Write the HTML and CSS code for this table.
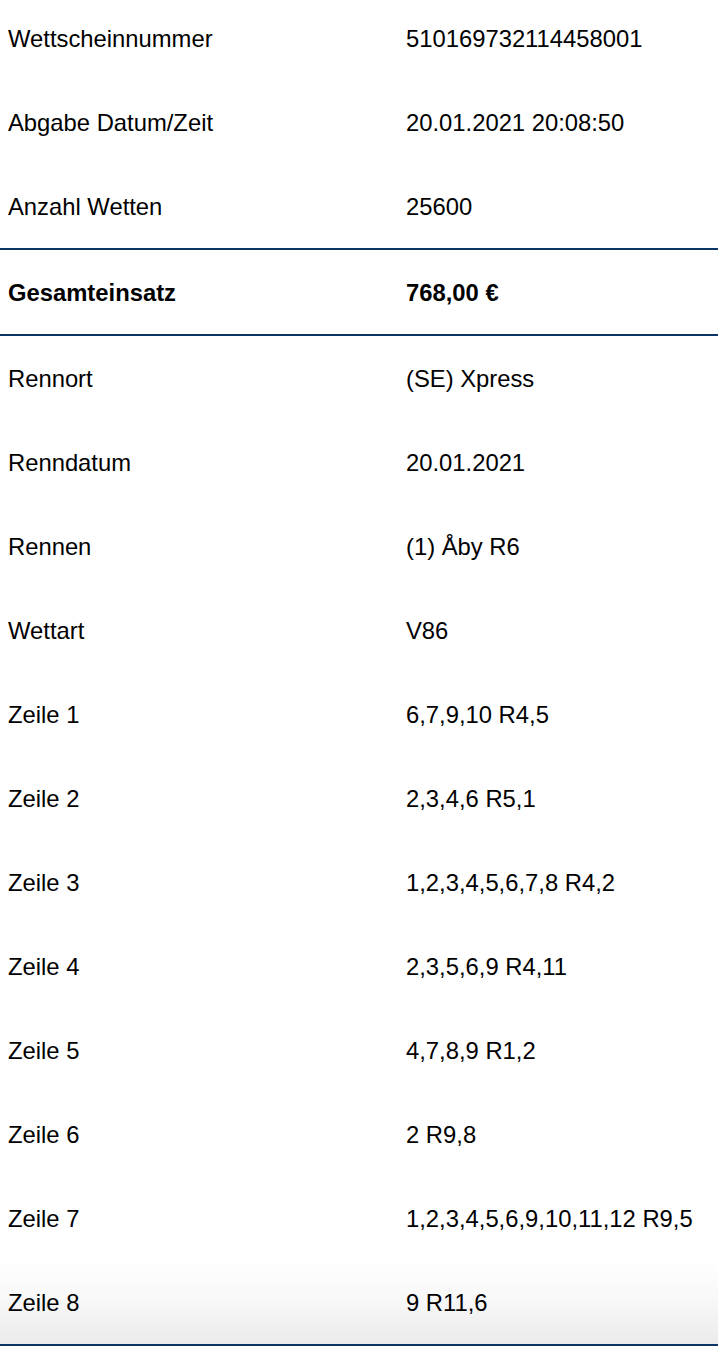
FILE: index.html
```html
<!DOCTYPE html>
<html lang="de">
<head>
<meta charset="utf-8">
<title>Wettschein</title>
<link rel="stylesheet" href="styles.css">
</head>
<body>
<div class="ticket">
  <div class="row row--first"><span class="label">Wettscheinnummer</span><span class="value">510169732114458001</span></div>
  <div class="row"><span class="label">Abgabe Datum/Zeit</span><span class="value">20.01.2021 20:08:50</span></div>
  <div class="row"><span class="label">Anzahl Wetten</span><span class="value">25600</span></div>
  <div class="row row--total"><span class="label">Gesamteinsatz</span><span class="value">768,00 €</span></div>
  <div class="row"><span class="label">Rennort</span><span class="value">(SE) Xpress</span></div>
  <div class="row"><span class="label">Renndatum</span><span class="value">20.01.2021</span></div>
  <div class="row"><span class="label">Rennen</span><span class="value">(1) Åby R6</span></div>
  <div class="row"><span class="label">Wettart</span><span class="value">V86</span></div>
  <div class="row"><span class="label">Zeile 1</span><span class="value">6,7,9,10 R4,5</span></div>
  <div class="row"><span class="label">Zeile 2</span><span class="value">2,3,4,6 R5,1</span></div>
  <div class="row"><span class="label">Zeile 3</span><span class="value">1,2,3,4,5,6,7,8 R4,2</span></div>
  <div class="row"><span class="label">Zeile 4</span><span class="value">2,3,5,6,9 R4,11</span></div>
  <div class="row"><span class="label">Zeile 5</span><span class="value">4,7,8,9 R1,2</span></div>
  <div class="row"><span class="label">Zeile 6</span><span class="value">2 R9,8</span></div>
  <div class="row"><span class="label">Zeile 7</span><span class="value">1,2,3,4,5,6,9,10,11,12 R9,5</span></div>
  <div class="row row--last"><span class="label">Zeile 8</span><span class="value">9 R11,6</span></div>
</div>
</body>
</html>
```
FILE: styles.css
```css
html, body {
  margin: 0;
  padding: 0;
  background: #ffffff;
}
body {
  font-family: "Liberation Sans", Arial, Helvetica, sans-serif;
  font-size: 23.8px;
  color: #000000;
}
.ticket {
  display: flex;
  flex-direction: column;
  width: 718px;
}
.row {
  display: grid;
  grid-template-columns: 398px 1fr;
  align-items: center;
  height: 84px;
  padding-left: 8px;
  box-sizing: border-box;
  line-height: 27px;
}
.row--first {
  height: 80px;
  padding-bottom: 4px;
}
.row--total {
  font-weight: bold;
  border-top: 2px solid #0b3566;
  border-bottom: 2px solid #0b3566;
  height: 88px;
}
.row--last {
  height: 86px;
  border-bottom: 2px solid #0b3566;
  background: linear-gradient(to bottom, #ffffff 0%, #f8f8f8 45%, #ebebeb 100%);
}
.value {
  white-space: nowrap;
}
```
